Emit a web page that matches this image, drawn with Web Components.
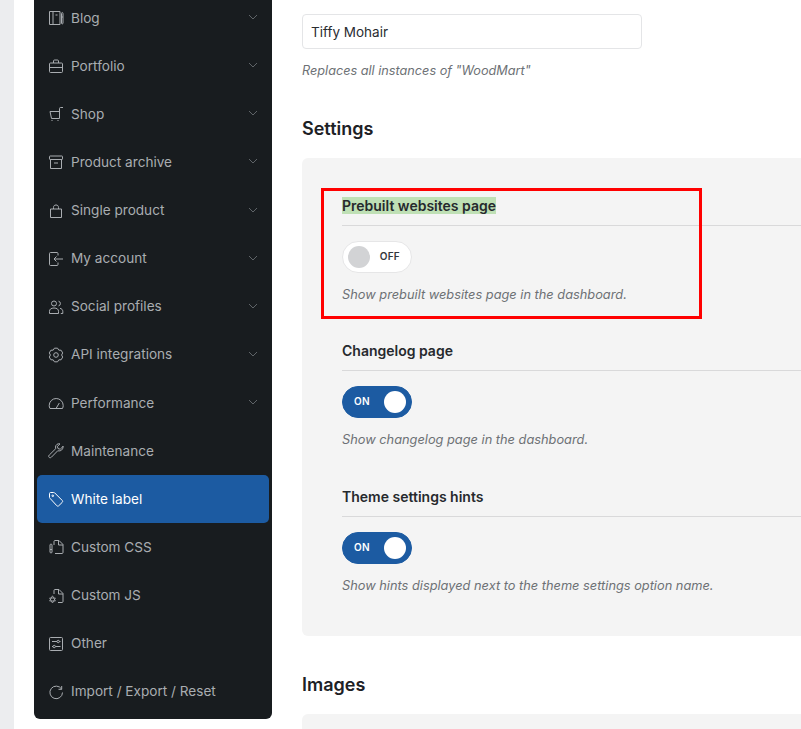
<!DOCTYPE html>
<html lang="en">
<head>
<meta charset="utf-8">
<title>White label</title>
<style>
  html, body { margin: 0; height: 100%; overflow: hidden; background: #fff; }
  body { font-family: Inter, "Liberation Sans", sans-serif; }
</style>
</head>
<body>
<app-shell>
  <side-nav slot="nav">
    <nav-item icon="blog" arrow>Blog</nav-item>
    <nav-item icon="portfolio" arrow>Portfolio</nav-item>
    <nav-item icon="shop" arrow>Shop</nav-item>
    <nav-item icon="archive" arrow>Product archive</nav-item>
    <nav-item icon="bag" arrow>Single product</nav-item>
    <nav-item icon="account" arrow>My account</nav-item>
    <nav-item icon="social" arrow>Social profiles</nav-item>
    <nav-item icon="gear" arrow>API integrations</nav-item>
    <nav-item icon="gauge" arrow>Performance</nav-item>
    <nav-item icon="wrench">Maintenance</nav-item>
    <nav-item icon="tag" active>White label</nav-item>
    <nav-item icon="css">Custom CSS</nav-item>
    <nav-item icon="js">Custom JS</nav-item>
    <nav-item icon="sliders">Other</nav-item>
    <nav-item icon="reset">Import / Export / Reset</nav-item>
  </side-nav>

  <text-option value="Tiffy Mohair" hint='Replaces all instances of "WoodMart"'></text-option>

  <section-title>Settings</section-title>
  <settings-panel>
    <option-field label="Prebuilt websites page" hint="Show prebuilt websites page in the dashboard." marked></option-field>
    <option-field label="Changelog page" hint="Show changelog page in the dashboard." on></option-field>
    <option-field label="Theme settings hints" hint="Show hints displayed next to the theme settings option name." on></option-field>
  </settings-panel>

  <section-title class="images">Images</section-title>
  <settings-panel class="stub"></settings-panel>
</app-shell>

<script>
// six lobed cog outline for the API integrations icon
function cogPath() {
  let d = "";
  for (let i = 0; i < 6; i++) {
    const a = i * 60 - 90;
    [[a - 13, 7], [a + 13, 7], [a + 30, 5.6]].forEach(([deg, r]) => {
      const x = 8 + r * Math.cos(deg * Math.PI / 180);
      const y = 8 + r * Math.sin(deg * Math.PI / 180);
      d += (d ? "L" : "M") + x.toFixed(2) + " " + y.toFixed(2);
    });
  }
  return d + "z";
}

const ICONS = {
  blog: '<path d="M1.5 1.5h10.500v13H1.500zM5 1.500v13M7.500 5h2"/><path d="M13.500 3.500c0-1.300 1.500-1.300 1.500 0v9.500c0 1.300-1.500 1.300-1.500 0zM13.500 7h1.500"/>',
  portfolio: '<rect x="1.500" y="5" width="13" height="9.500" rx="1"/><path d="M5.500 5V3c0-.6.400-1 1-1h3c.6 0 1 .4 1 1v2M1.500 9.500h13M7 9.500h2"/>',
  shop: '<path d="M15 1.500h-2.500c-.6 0-1 .4-1 1v10H3.500L2 5.500h9.500"/><path d="M3.500 14.500h1M9.500 14.500h1"/>',
  archive: '<rect x="1.500" y="2" width="13" height="3.500" rx=".6"/><path d="M2.500 5.500v9h11v-9M6 9h4"/>',
  bag: '<path d="M2.500 6h11v8.500h-11zM5.500 6V4.500C5.500 2.800 6.500 2 8 2s2.500.8 2.500 2.500V6"/>',
  account: '<path d="M10 4.500v-2c0-.6-.4-1-1-1H2.500c-.6 0-1 .4-1 1v11c0 .6.400 1 1 1H9c.6 0 1-.4 1-1v-2M15 8H6M8.500 5.500 6 8l2.500 2.500"/>',
  social: '<circle cx="6" cy="4.500" r="2.500"/><path d="M1.500 14.500v-2.200c0-2 1.500-3.300 4.500-3.300s4.500 1.300 4.500 3.300v2.200zM10.500 2.200a2.400 2.400 0 0 1 0 4.700M12 9.300c1.600.4 2.800 1.400 2.800 3v2.200h-2"/>',
  gear: `<path d="${cogPath()}" stroke-linejoin="round"/><circle cx="8" cy="8" r="2.300"/>`,
  gauge: '<path d="M2 13.500h12.500c.5-1 .7-2 .7-3a7 7 0 0 0-14 0c0 1 .2 2 .8 3zM8.300 13l3-5"/>',
  wrench: '<path d="M15 3.500l-2.800 2.700-2.200-.6-.6-2.200L12 .9C9.800.2 7.600 1.800 7.500 4c0 .6.100 1.100.3 1.600L1.300 12c-.8.800-.8 1.700-.2 2.300.6.600 1.600.6 2.300-.1l6.400-6.500c2.800 1 5.800-1.500 5.200-4.700z" stroke-linejoin="round"/>',
  tag: '<path d="M1.500 4V2.500c0-.6.400-1 1-1h3.200c.4 0 .7.100 1 .4l7.500 7.500c.6.600.6 1.400 0 2l-3.400 3.300c-.6.600-1.400.6-2 0L1.900 7.200c-.3-.3-.4-.6-.4-1z"/><circle cx="4.800" cy="4.800" r=".8"/>',
  css: '<path d="M6 6V2.500c0-.6.400-1 1-1h4l4 4v8c0 .6-.4 1-1 1H7M10.500 1.500v4.500H15"/><path d="M2 6c0-1.300 2-1.300 2 0v7c0 1.300-2 1.300-2 0zM2 10.500h2"/>',
  js: '<path d="M6 6V2.500c0-.6.400-1 1-1h4l4 4v8c0 .6-.4 1-1 1h-4M10.500 1.500v4.500H15"/><path d="M4.500 7.800 7.400 13H1.600zM4.500 15 1.600 10h5.800z" stroke-width=".8"/>',
  sliders: '<rect x="1.500" y="1.500" width="13" height="13" rx="1"/><path d="M4 5.500h5M11.500 5.500h1M4 10.500h1M7.500 10.500h5"/><circle cx="10.200" cy="5.500" r="1.200"/><circle cx="6.200" cy="10.500" r="1.200"/>',
  reset: '<path d="M13.500 5a6.300 6.300 0 1 0 1 3.500M10.500 5.300h3.200V2"/>'
};

class AppShell extends HTMLElement {
  constructor() {
    super();
    this.attachShadow({mode: "open"}).innerHTML = `
    <style>
      :host { display: flex; height: 729px; overflow: hidden; background: #fff; }
      .strip { flex: 0 0 14px; background: #ecedef; }
      .nav { flex: 0 0 238px; margin-left: 20px; }
      main { flex: 1; min-width: 0; margin-left: 30px; padding-top: 14px; }
    </style>
    <div class="strip"></div>
    <div class="nav"><slot name="nav"></slot></div>
    <main><slot></slot></main>`;
  }
}

class SideNav extends HTMLElement {
  constructor() {
    super();
    this.attachShadow({mode: "open"}).innerHTML = `
    <style>
      :host { display: block; height: 725px; margin-top: -6px; box-sizing: border-box; padding: 0 3px;
        background: #181c1f; border-radius: 0 0 6px 6px; }
    </style>
    <slot></slot>`;
  }
}

class NavItem extends HTMLElement {
  constructor() {
    super();
    this.attachShadow({mode: "open"});
  }
  connectedCallback() {
    this.shadowRoot.innerHTML = `
    <style>
      :host { display: flex; align-items: center; height: 48.14px; padding: 0 11px; box-sizing: border-box;
        border-radius: 5px; color: #a9adb1; font-size: 13.6px; }
      :host([active]) { background: #1c5ba2; color: #fff; }
      svg.ico { flex: none; width: 16px; height: 16px; margin-right: 7px; fill: none; stroke: currentColor; stroke-width: 1; }
      span { flex: 1; white-space: nowrap; padding-bottom: 1px; }
      svg.arrow { flex: none; width: 10px; height: 6px; margin-bottom: 2px; fill: none; stroke: #5f6468; stroke-width: 1; }
    </style>
    <svg class="ico" viewBox="0 0 16 16">${ICONS[this.getAttribute("icon")]}</svg>
    <span><slot></slot></span>
    ${this.hasAttribute("arrow") ? '<svg class="arrow" viewBox="0 0 10 6"><path d="M1 1l4 4 4-4"/></svg>' : ""}`;
  }
}

class TextOption extends HTMLElement {
  constructor() {
    super();
    this.attachShadow({mode: "open"});
  }
  connectedCallback() {
    this.shadowRoot.innerHTML = `
    <style>
      :host { display: block; }
      .input { box-sizing: border-box; width: 340px; height: 35px; padding: 0 8px; display: flex; align-items: center;
        border: 1px solid #e4e5e7; border-radius: 4px; color: #2a2d31; font-size: 13.5px; }
      .hint { margin-top: 14px; height: 15px; color: #6d7175; font-size: 12.7px; font-style: italic; line-height: 16px; }
    </style>
    <div class="input">${this.getAttribute("value")}</div>
    <div class="hint">${this.getAttribute("hint").replace(/"/g, "&quot;")}</div>`;
  }
}

class SectionTitle extends HTMLElement {
  constructor() {
    super();
    this.attachShadow({mode: "open"}).innerHTML = `
    <style>
      :host { display: block; margin: 39px 0 17px; color: #1d2125; font-size: 18px; font-weight: 600; line-height: 24px; }
      :host(.images) { margin-top: 37px; }
    </style>
    <slot></slot>`;
  }
}

class SettingsPanel extends HTMLElement {
  constructor() {
    super();
    this.attachShadow({mode: "open"}).innerHTML = `
    <style>
      :host { display: flex; flex-direction: column; gap: 28.4px; box-sizing: border-box; height: 478px; padding: 37px 0 0 40px;
        background: #f4f4f4; border-radius: 6px 0 0 6px; }
      :host(.stub) { height: 40px; padding: 0; }
    </style>
    <slot></slot>`;
  }
}

class ToggleSwitch extends HTMLElement {
  constructor() {
    super();
    this.attachShadow({mode: "open"}).innerHTML = `
    <style>
      :host { display: flex; align-items: center; justify-content: space-between; box-sizing: border-box;
        width: 70px; height: 32px; padding: 0 5px; border-radius: 16px; background: #fff; border: 1px solid #e6e6e7;
        color: #33373b; font-size: 10px; font-weight: 600; letter-spacing: .3px; }
      :host([on]) { background: #1c5ba2; border-color: #1c5ba2; color: #fff; padding: 0 5px 0 11px; }
      i { width: 22px; height: 22px; border-radius: 50%; background: #d2d3d5; }
      :host([on]) i { background: #fff; }
      span { padding-right: 6px; padding-bottom: 2px; }
      :host([on]) span { padding-right: 0; }
    </style>
    <i></i><span></span>`;
  }
  set state(on) {
    const root = this.shadowRoot;
    if (on) {
      this.setAttribute("on", "");
      root.appendChild(root.querySelector("i"));
    }
    root.querySelector("span").textContent = on ? "ON" : "OFF";
  }
}

class OptionField extends HTMLElement {
  constructor() {
    super();
    this.attachShadow({mode: "open"});
  }
  connectedCallback() {
    this.shadowRoot.innerHTML = `
    <style>
      :host { display: block; position: relative; height: 117px; }
      .label { height: 31px; box-sizing: border-box; border-bottom: 1px solid #d9d9da; }
      b { display: inline-block; color: #26292d; font-size: 14px; font-weight: 600; line-height: 17px; }
      :host([marked]) b { background: #bfe0b5; }
      toggle-switch { margin: 15px 0 14px; }
      .hint { color: #6d7175; font-size: 12.8px; font-style: italic; line-height: 16px; white-space: nowrap; }
      .mark { position: absolute; left: -21px; top: -7px; width: 381px; height: 131px; box-sizing: border-box; border: 3px solid #f00; }
    </style>
    <div class="label"><b>${this.getAttribute("label")}</b></div>
    <toggle-switch></toggle-switch>
    <div class="hint">${this.getAttribute("hint")}</div>
    ${this.hasAttribute("marked") ? '<div class="mark"></div>' : ""}`;
    this.shadowRoot.querySelector("toggle-switch").state = this.hasAttribute("on");
  }
}

customElements.define("app-shell", AppShell);
customElements.define("side-nav", SideNav);
customElements.define("nav-item", NavItem);
customElements.define("text-option", TextOption);
customElements.define("section-title", SectionTitle);
customElements.define("settings-panel", SettingsPanel);
customElements.define("toggle-switch", ToggleSwitch);
customElements.define("option-field", OptionField);
</script>
</body>
</html>
